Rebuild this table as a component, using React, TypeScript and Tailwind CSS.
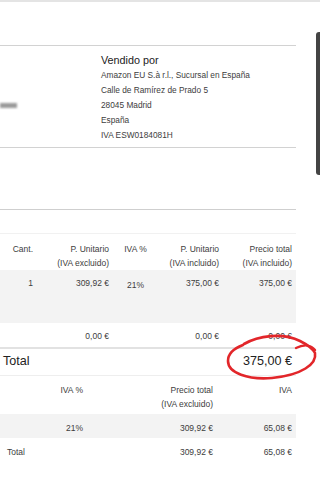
import React from 'react'

const font = { fontFamily: '"Liberation Sans", Arial, sans-serif' }

const seller = [
  'Amazon EU S.à r.l., Sucursal en España',
  'Calle de Ramírez de Prado 5',
  '28045 Madrid',
  'España',
  'IVA ESW0184081H',
]

const App = () => {
  return (
    <div className="relative w-[320px] h-[481px] overflow-hidden bg-white text-[#3d3d3d]" style={font}>
      <div className="h-[2px] bg-[#e4e4e4]" />
      <div className="w-[296px]">
        <div className="h-[43px]" />

        {/* seller block */}
        <div className="flex border-t border-b border-[#d2d2d2]">
          <div className="w-[101px]">
            <div className="mt-[57px] h-[5px] w-[17px] bg-[#9a9a9a] blur-[1px]" />
          </div>
          <div className="pt-[6px] pb-[4px]">
            <div className="text-[10.8px] leading-[16px] text-[#222]">Vendido por</div>
            {seller.map((line, i) => (
              <div key={i} className="text-[8.3px] leading-[15px]">
                {line}
              </div>
            ))}
          </div>
        </div>

        <div className="h-[62px] border-b border-[#cfcfcf]" />
        <div className="h-[24px] border-b border-[#f1f1f1]" />

        {/* items table */}
        <div className="flex h-[36px] pt-[8px] text-[8.5px] leading-[14px]">
          <div className="w-[33px] text-right">Cant.</div>
          <div className="w-[76px] text-right">
            P. Unitario
            <br />
            (IVA excluido)
          </div>
          <div className="w-[53px] text-center">IVA %</div>
          <div className="w-[57px] text-right">
            P. Unitario
            <br />
            (IVA incluido)
          </div>
          <div className="w-[73px] text-right">
            Precio total
            <br />
            (IVA incluido)
          </div>
        </div>
        <div className="flex h-[53px] bg-[#f3f3f3] pt-[6px] text-[8.5px] leading-[14px]">
          <div className="w-[33px] text-right">1</div>
          <div className="w-[76px] text-right">309,92 €</div>
          <div className="w-[53px] text-center pt-[2px]">21%</div>
          <div className="w-[57px] text-right">375,00 €</div>
          <div className="w-[73px] text-right">375,00 €</div>
        </div>
        <div className="flex h-[24px] pt-[6px] text-[8.5px] leading-[14px]">
          <div className="w-[109px] text-right">0,00 €</div>
          <div className="w-[110px] text-right">0,00 €</div>
          <div className="w-[73px] text-right">0,00 €</div>
        </div>
        <div className="h-[2px] bg-[#e2e2e2]" />
        <div className="flex h-[27px] items-start justify-between border-b border-[#eeeeee] pt-[4px] pl-[3px] pr-[4px] text-[12.6px] leading-[16px] text-[#222]">
          <span>Total</span>
          <span>375,00 €</span>
        </div>

        {/* VAT summary */}
        <div className="flex h-[38px] pt-[7px] text-[8.5px] leading-[14px]">
          <div className="w-[83px] text-right">IVA %</div>
          <div className="w-[130px] text-right">
            Precio total
            <br />
            (IVA excluido)
          </div>
          <div className="w-[79px] text-right">IVA</div>
        </div>
        <div className="flex h-[24px] bg-[#f3f3f3] pt-[7px] text-[8.5px] leading-[14px]">
          <div className="w-[83px] text-right">21%</div>
          <div className="w-[130px] text-right">309,92 €</div>
          <div className="w-[79px] text-right">65,08 €</div>
        </div>
        <div className="flex pt-[7px] text-[8.5px] leading-[14px]">
          <div className="w-[83px] pl-[7px]">Total</div>
          <div className="w-[130px] text-right">309,92 €</div>
          <div className="w-[79px] text-right">65,08 €</div>
        </div>
      </div>

      {/* scrollbar thumb */}
      <div className="absolute right-0 top-[32px] h-[143px] w-[4px] rounded-l-[3px] bg-[#444]" />

      {/* hand-drawn red circle */}
      <svg className="pointer-events-none absolute left-0 top-0" width="320" height="481" viewBox="0 0 320 481">
        <path
          d="M 244 344 C 258 336, 282 332, 300 341 C 308 345, 313 349, 315 353 C 317 364, 302 375, 272 378 C 248 380, 228 373, 228 361 C 228 353, 235 348, 243 345"
          fill="none"
          stroke="#e2262a"
          strokeWidth="2.6"
          strokeLinecap="round"
        />
        <path
          d="M 296 348 C 304 344, 311 345, 315 350"
          fill="none"
          stroke="#e2262a"
          strokeWidth="2.4"
          strokeLinecap="round"
        />
      </svg>
    </div>
  )
}

export default App
